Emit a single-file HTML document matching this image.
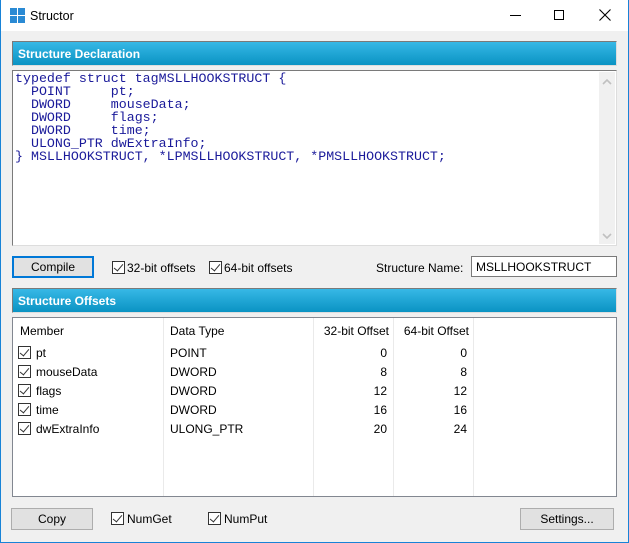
<!DOCTYPE html>
<html><head><meta charset="utf-8"><style>
*{margin:0;padding:0;box-sizing:border-box}
body{width:629px;height:543px;background:#f0f0f0;position:relative;overflow:hidden;font-family:"Liberation Sans",sans-serif;font-size:12px;color:#000}
.a{position:absolute}
.hdr{position:absolute;left:12px;width:605px;height:25px;border:1px solid #7a7a7a;border-right-color:#ddd;border-bottom-color:#ddd;background:linear-gradient(#37b8e6,#0a93c3);color:#fff;font-weight:bold;font-size:12px;padding:5px 0 0 5px}
.btn{position:absolute;background:#e1e1e1;border:1px solid #adadad;text-align:center;font-size:12px;line-height:21px}
.cb{position:absolute;width:13px;height:13px;border:1px solid #333;background:#fff}
.cb:after{content:"";position:absolute;left:3px;top:0px;width:4px;height:8px;border:solid #333;border-width:0 1.3px 1.3px 0;transform:rotate(40deg)}
.lbl{position:absolute;font-size:12px}
pre{font-family:"Liberation Mono",monospace;font-size:13.3px;line-height:13px;color:#1a1a9a}
.r{text-align:right}
</style></head><body>
<div class="a" style="left:0;top:0;width:629px;height:31px;background:#fff"></div>
<div class="a" style="left:0;top:0;width:1px;height:543px;background:#1883d7"></div>
<div class="a" style="right:0;top:0;width:1px;height:543px;background:#1883d7"></div>
<div class="a" style="left:0;bottom:0;width:629px;height:1px;background:#1883d7"></div>
<svg class="a" style="left:10px;top:8px" width="16" height="16"><rect x="0" y="0" width="7" height="7" fill="#2a8ad4"/><rect x="8" y="0" width="7" height="7" fill="#2a8ad4"/><rect x="0" y="8" width="7" height="7" fill="#2a8ad4"/><rect x="8" y="8" width="7" height="7" fill="#2a8ad4"/></svg>
<div class="lbl" style="left:30px;top:9px;font-size:12.5px">Structor</div>
<div class="a" style="left:510px;top:15px;width:11px;height:1px;background:#000"></div>
<div class="a" style="left:554px;top:10px;width:10px;height:10px;border:1px solid #000"></div>
<svg class="a" style="left:599px;top:9px" width="12" height="12"><path d="M0.5 0.5L11.5 11.5M11.5 0.5L0.5 11.5" stroke="#000" stroke-width="1.1"/></svg>

<div class="hdr" style="top:41px">Structure Declaration</div>
<div class="a" style="left:12px;top:70px;width:605px;height:176px;background:#fff;border:1px solid #7a7a7a;border-right-color:#ddd;border-bottom-color:#ddd"></div>
<div class="a" style="left:599px;top:72px;width:16px;height:172px;background:#f0f0f0"></div>
<svg class="a" style="left:602px;top:78px" width="10" height="8"><path d="M1 6L5 2L9 6" stroke="#c0c0c0" stroke-width="1.6" fill="none"/></svg>
<svg class="a" style="left:602px;top:232px" width="10" height="8"><path d="M1 2L5 6L9 2" stroke="#c0c0c0" stroke-width="1.6" fill="none"/></svg>
<pre class="a" style="left:15px;top:72px">typedef struct tagMSLLHOOKSTRUCT {
  POINT     pt;
  DWORD     mouseData;
  DWORD     flags;
  DWORD     time;
  ULONG_PTR dwExtraInfo;
} MSLLHOOKSTRUCT, *LPMSLLHOOKSTRUCT, *PMSLLHOOKSTRUCT;</pre>

<div class="btn" style="left:12px;top:256px;width:82px;height:22px;border:2px solid #0078d7;line-height:19px">Compile</div>
<div class="cb" style="left:112px;top:261px"></div><div class="lbl" style="left:127px;top:261px">32-bit offsets</div>
<div class="cb" style="left:209px;top:261px"></div><div class="lbl" style="left:224px;top:261px">64-bit offsets</div>
<div class="lbl" style="left:376px;top:261px">Structure Name:</div>
<div class="a" style="left:471px;top:256px;width:146px;height:21px;background:#fff;border:1px solid #7a7a7a;padding:3px 0 0 4px">MSLLHOOKSTRUCT</div>

<div class="hdr" style="top:288px">Structure Offsets</div>
<div class="a" style="left:12px;top:317px;width:605px;height:180px;background:#fff;border:1px solid #828790"></div>
<div class="a" style="left:163px;top:318px;width:1px;height:178px;background:#eaeaea"></div>
<div class="a" style="left:313px;top:318px;width:1px;height:178px;background:#eaeaea"></div>
<div class="a" style="left:393px;top:318px;width:1px;height:178px;background:#eaeaea"></div>
<div class="a" style="left:473px;top:318px;width:1px;height:178px;background:#eaeaea"></div>
<div class="lbl" style="left:20px;top:324px">Member</div>
<div class="lbl" style="left:170px;top:324px">Data Type</div>
<div class="lbl r" style="left:313px;top:324px;width:76px">32-bit Offset</div>
<div class="lbl r" style="left:393px;top:324px;width:76px">64-bit Offset</div>

<div class="cb" style="left:18px;top:346px"></div><div class="lbl" style="left:36px;top:346px">pt</div><div class="lbl" style="left:170px;top:346px">POINT</div><div class="lbl r" style="left:313px;top:346px;width:74px">0</div><div class="lbl r" style="left:393px;top:346px;width:74px">0</div>
<div class="cb" style="left:18px;top:365px"></div><div class="lbl" style="left:36px;top:365px">mouseData</div><div class="lbl" style="left:170px;top:365px">DWORD</div><div class="lbl r" style="left:313px;top:365px;width:74px">8</div><div class="lbl r" style="left:393px;top:365px;width:74px">8</div>
<div class="cb" style="left:18px;top:384px"></div><div class="lbl" style="left:36px;top:384px">flags</div><div class="lbl" style="left:170px;top:384px">DWORD</div><div class="lbl r" style="left:313px;top:384px;width:74px">12</div><div class="lbl r" style="left:393px;top:384px;width:74px">12</div>
<div class="cb" style="left:18px;top:403px"></div><div class="lbl" style="left:36px;top:403px">time</div><div class="lbl" style="left:170px;top:403px">DWORD</div><div class="lbl r" style="left:313px;top:403px;width:74px">16</div><div class="lbl r" style="left:393px;top:403px;width:74px">16</div>
<div class="cb" style="left:18px;top:422px"></div><div class="lbl" style="left:36px;top:422px">dwExtraInfo</div><div class="lbl" style="left:170px;top:422px">ULONG_PTR</div><div class="lbl r" style="left:313px;top:422px;width:74px">20</div><div class="lbl r" style="left:393px;top:422px;width:74px">24</div>

<div class="btn" style="left:11px;top:508px;width:82px;height:22px">Copy</div>
<div class="cb" style="left:111px;top:512px"></div><div class="lbl" style="left:127px;top:512px">NumGet</div>
<div class="cb" style="left:208px;top:512px"></div><div class="lbl" style="left:224px;top:512px">NumPut</div>
<div class="btn" style="left:520px;top:508px;width:94px;height:22px">Settings...</div>
</body></html>
